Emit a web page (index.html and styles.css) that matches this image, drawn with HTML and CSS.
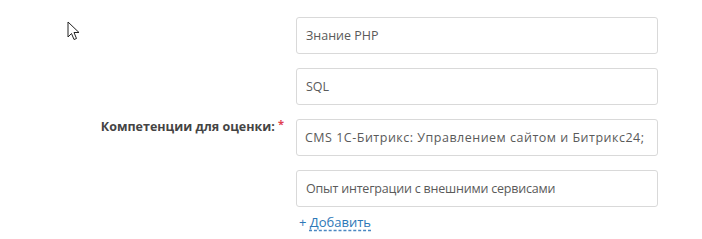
FILE: index.html
```html
<!DOCTYPE html>
<html>
<head>
    <title>Компетенции</title>
    <link rel="stylesheet" href="styles.css">
</head>
<body>
    <div class="form-row">
        <label class="field-label">Компетенции для оценки: <span class="req">*</span></label>
        <div class="field-list">
            <input type="text" class="field-input" value="Знание PHP">
            <input type="text" class="field-input" value="SQL">
            <input type="text" class="field-input wide" value="CMS 1С-Битрикс: Управлением сайтом и Битрикс24;">
            <input type="text" class="field-input" value="Опыт интеграции с внешними сервисами">
            <a href="#" class="add-link">+ <span>Добавить</span></a>
        </div>
    </div>

    <svg class="cursor" width="13" height="20" viewBox="0 0 13 20">
        <path d="M1 1 L1 16 L4.5 12.5 L7 18.5 L9.5 17.5 L7 11.5 L12 11.5 Z" fill="#fff" stroke="#222" stroke-width="1" stroke-linejoin="miter"/>
    </svg>
</body>
</html>
```

FILE: styles.css
```css
* {
    margin: 0;
    padding: 0;
    box-sizing: border-box;
}

body {
    background: #fff;
    font-family: "Open Sans", sans-serif;
    color: #555;
}

.form-row {
    display: flex;
    align-items: center;
    padding-top: 17px;
}

.field-label {
    width: 284px;
    text-align: right;
    font-size: 12.5px;
    font-weight: bold;
    color: #444;
    margin-right: 12px;
    margin-top: 2px;
}
.req {
    color: #e0404f;
    font-size: 11px;
    vertical-align: 3px;
}

.field-list {
    display: flex;
    flex-direction: column;
    align-items: flex-start;
}

.field-input {
    width: 362px;
    height: 37px;
    margin-bottom: 14px;
    padding: 0 9px;
    border: 1px solid #d9d9d9;
    border-radius: 3px;
    font-family: "Open Sans", sans-serif;
    font-size: 12.5px;
    color: #5a5a5a;
    outline: none;
}
.field-input.wide {
    padding-left: 8px;
    letter-spacing: 0.5px;
}
.field-input:last-of-type {
    margin-bottom: 6px;
}
.field-input:nth-of-type(4) {
    letter-spacing: -0.2px;
}

.add-link {
    text-decoration: none;
    color: #2c78b8;
    font-size: 13px;
    line-height: 18px;
    margin-left: 3px;
}
.add-link span {
    color: #2c78b8;
    text-decoration: underline dashed #4a88c2;
    text-underline-offset: 3px;
}

.cursor {
    position: absolute;
    left: 67px;
    top: 21px;
}
```
